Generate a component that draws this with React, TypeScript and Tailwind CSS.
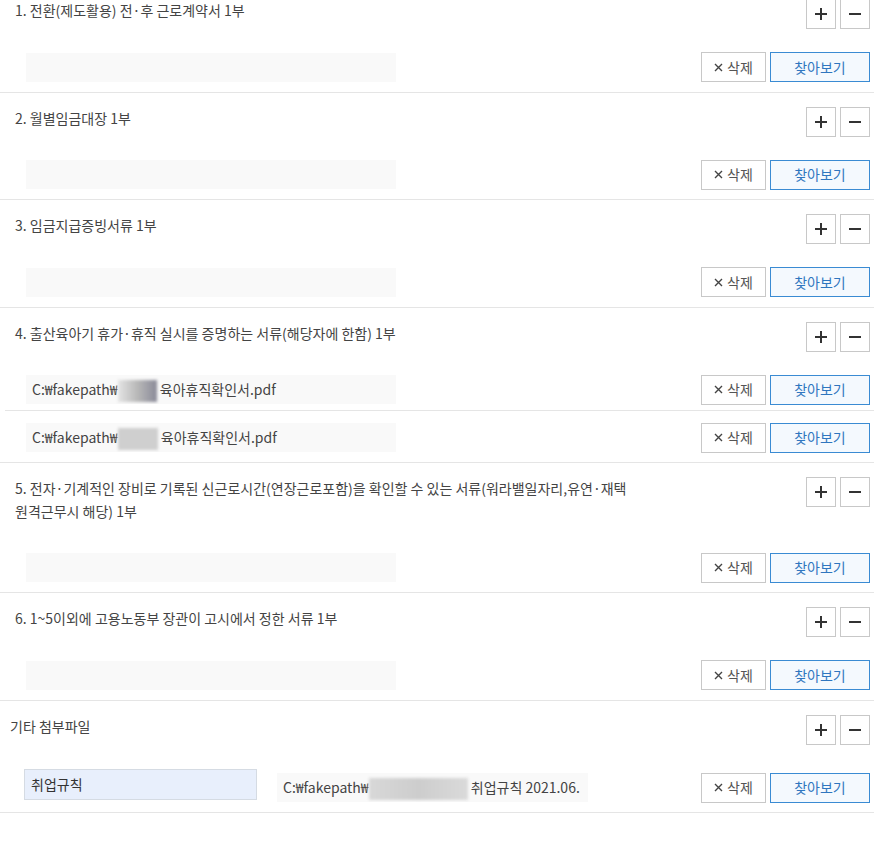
import React from 'react'

type FileItem = { blur: number; tone: 'dark' | 'light'; name: string } | null

interface DocSection {
  title: React.ReactNode
  files: FileItem[]
}

const sections: DocSection[] = [
  { title: '1. 전환(제도활용) 전·후 근로계약서 1부', files: [null] },
  { title: '2. 월별임금대장 1부', files: [null] },
  { title: '3. 임금지급증빙서류 1부', files: [null] },
  {
    title: '4. 출산육아기 휴가·휴직 실시를 증명하는 서류(해당자에 한함) 1부',
    files: [
      { blur: 39, tone: 'dark', name: '육아휴직확인서.pdf' },
      { blur: 40, tone: 'light', name: '육아휴직확인서.pdf' },
    ],
  },
  {
    title: '5. 전자·기계적인 장비로 기록된 신근로시간(연장근로포함)을 확인할 수 있는 서류(워라밸일자리,유연·재택 원격근무시 해당) 1부',
    files: [null],
  },
  { title: '6. 1~5이외에 고용노동부 장관이 고시에서 정한 서류 1부', files: [null] },
]

const PlusMinus = () => (
  <div className="flex gap-[4px] shrink-0">
    <button className="w-[30px] h-[30px] border border-[#c8c8c8] bg-white flex items-center justify-center">
      <svg width="14" height="14" viewBox="0 0 14 14">
        <path d="M7 1v12M1 7h12" stroke="#333" strokeWidth="2" />
      </svg>
    </button>
    <button className="w-[30px] h-[30px] border border-[#c8c8c8] bg-white flex items-center justify-center">
      <svg width="14" height="14" viewBox="0 0 14 14">
        <path d="M1 7h12" stroke="#333" strokeWidth="2" />
      </svg>
    </button>
  </div>
)

const RowButtons = () => (
  <div className="flex gap-[4px] shrink-0">
    <button className="w-[65px] h-[30px] border border-[#c8c8c8] bg-white flex items-center justify-center gap-[4px] text-[14px] text-[#555]">
      <svg width="9" height="9" viewBox="0 0 9 9">
        <path d="M1 1l7 7M8 1l-7 7" stroke="#444" strokeWidth="1.4" />
      </svg>
      삭제
    </button>
    <button className="w-[100px] h-[30px] border border-[#3a8bd3] bg-[#f4f9fe] flex items-center justify-center text-[14px] text-[#2f76bf]">
      찾아보기
    </button>
  </div>
)

const Blur = ({ w, tone }: { w: number; tone: 'dark' | 'light' }) => (
  <span
    className={
      tone === 'dark'
        ? 'inline-block h-[22px] align-middle bg-gradient-to-r from-[#e4e4e4] via-[#b8b8b8] to-[#8a8a98] blur-[1.5px]'
        : 'inline-block h-[22px] align-middle bg-[#cfcfcf] blur-[1.5px]'
    }
    style={{ width: w }}
  />
)

const FileBox = ({ file }: { file: FileItem }) => (
  <div className="w-[370px] h-[29px] bg-[#f9f9f9] pl-[6px] text-[14px] leading-[29px] text-[#444] whitespace-nowrap overflow-hidden">
    {file && (
      <>
        C:₩fakepath₩<Blur w={file.blur} tone={file.tone} /> {file.name}
      </>
    )}
  </div>
)

const Section = ({ section }: { section: DocSection }) => (
  <div className="border-b border-[#e5e5e5] pt-[14px] pb-[9.5px]">
    <div className="flex justify-between items-start pl-[15px] pr-[4px]">
      <p className="w-[630px] break-keep text-[14px] leading-[22.5px] text-[#444] pb-[30.5px]">{section.title}</p>
      <PlusMinus />
    </div>
    {section.files.map((file, i) => {
      const last = i === section.files.length - 1
      return (
        <div
          key={i}
          className={
            last
              ? i > 0
                ? 'ml-[5px] pl-[21px] pr-[4px] pt-[12px] flex items-center justify-between'
                : 'ml-[5px] pl-[21px] pr-[4px] flex items-center justify-between'
              : 'ml-[5px] pl-[21px] pr-[4px] pb-[5px] border-b border-[#e5e5e5] flex items-center justify-between'
          }
        >
          <FileBox file={file} />
          <RowButtons />
        </div>
      )
    })}
  </div>
)

export default function App() {
  return (
    <div className="w-[874px] min-h-[856px] bg-white overflow-hidden font-['Noto_Sans_CJK_KR','Malgun_Gothic',sans-serif]">
      <div className="-mt-[15px]">
        {sections.map((s, i) => (
          <Section key={i} section={s} />
        ))}
        <div className="border-b border-[#e5e5e5] pt-[14px] pb-[9.5px]">
          <div className="flex justify-between items-start pl-[10px] pr-[4px]">
            <p className="text-[14px] leading-[22.5px] text-[#444] pb-[30.5px]">기타 첨부파일</p>
            <PlusMinus />
          </div>
          <div className="pl-[24px] pr-[4px] flex items-start justify-between">
            <div className="flex items-start gap-[20px]">
              <div className="mt-[1px] w-[233px] h-[31px] border border-[#d5dbe3] bg-[#e8effc] pl-[6px] text-[14px] leading-[29px] text-[#333]">
                취업규칙
              </div>
              <div className="mt-[5px] w-[311px] h-[29px] bg-[#f9f9f9] pl-[6px] text-[14px] leading-[29px] text-[#444] whitespace-nowrap overflow-hidden">
                C:₩fakepath₩<span className="inline-block w-[99px] h-[22px] align-middle bg-gradient-to-r from-[#d8d8d8] via-[#cdcdcd] to-[#dadada] blur-[1.5px]" /> 취업규칙 2021.06.
              </div>
            </div>
            <div className="mt-[5px]">
              <RowButtons />
            </div>
          </div>
        </div>
      </div>
    </div>
  )
}
